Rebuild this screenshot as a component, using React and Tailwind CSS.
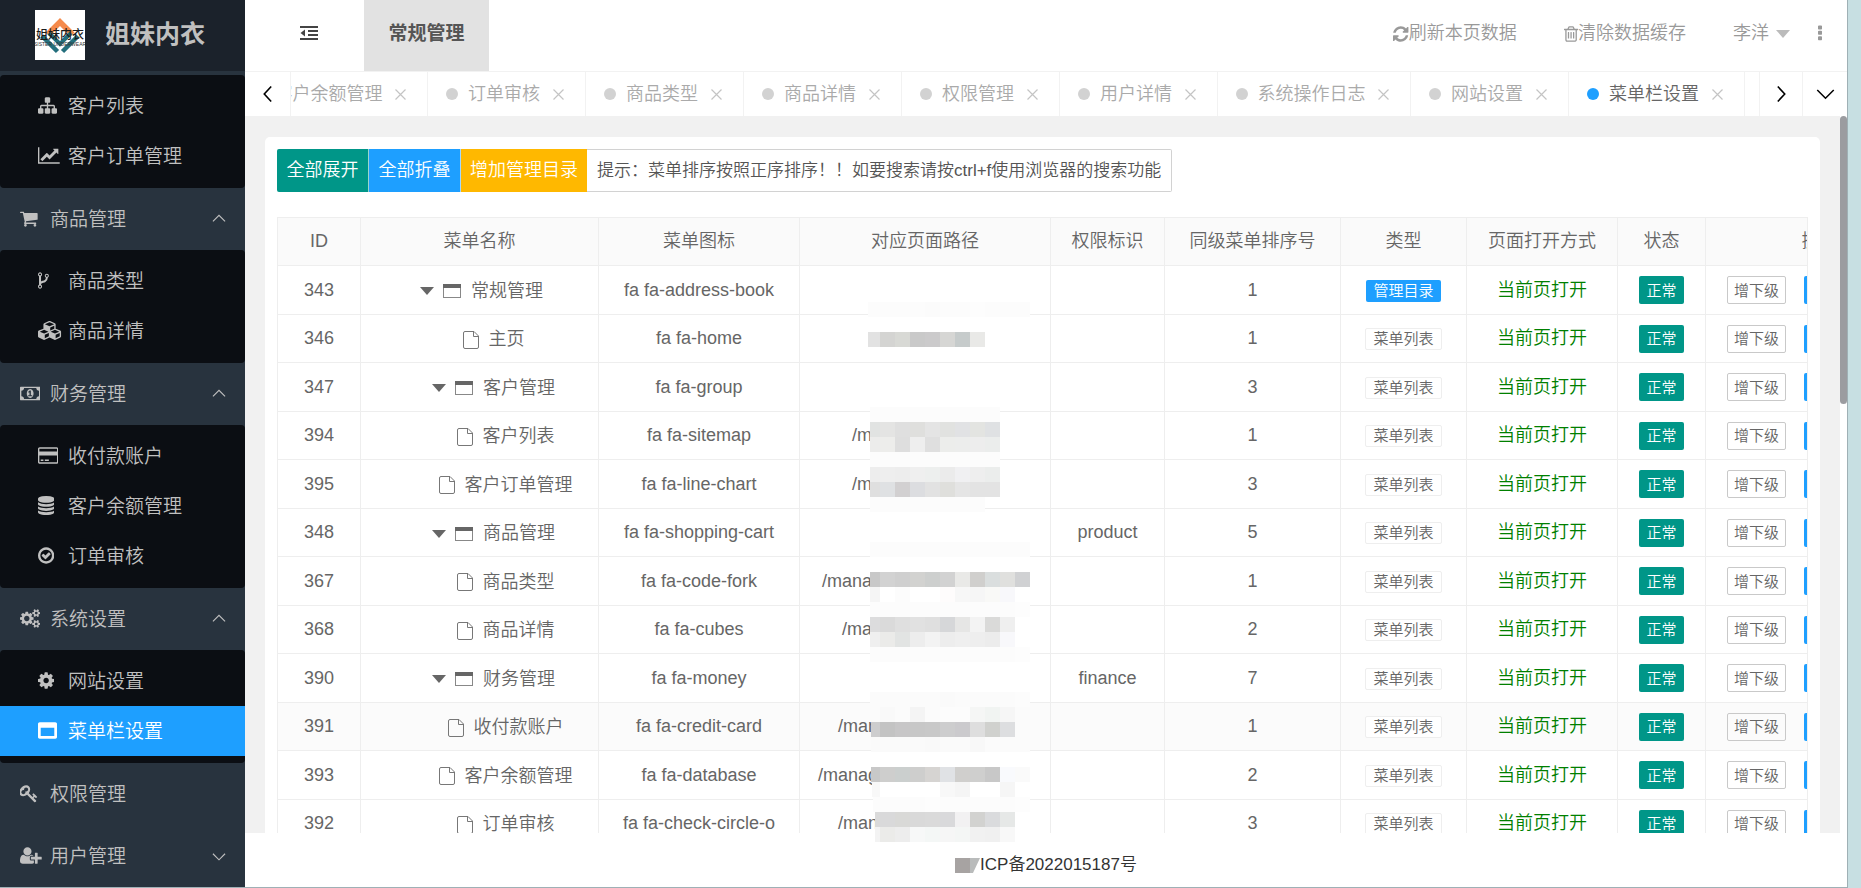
import React from "react";

const GLYPHS = {
  sitemap: ["0 0 1792 1792", "M1792 1248v320q0 40-28 68t-68 28h-320q-40 0-68-28t-28-68v-320q0-40 28-68t68-28h96v-192h-512v192h96q40 0 68 28t28 68v320q0 40-28 68t-68 28h-320q-40 0-68-28t-28-68v-320q0-40 28-68t68-28h96v-192h-512v192h96q40 0 68 28t28 68v320q0 40-28 68t-68 28h-320q-40 0-68-28t-28-68v-320q0-40 28-68t68-28h96v-192q0-52 38-90t90-38h512v-192h-96q-40 0-68-28t-28-68v-320q0-40 28-68t68-28h320q40 0 68 28t28 68v320q0 40-28 68t-68 28h-96v192h512q52 0 90 38t38 90v192h96q40 0 68 28t28 68z"],
  lineChart: ["0 0 2048 1792", "M2048 1536v128h-2048v-1536h128v1408h1920zm-128-1248v435q0 21-19.5 29.5t-35.5-7.5l-121-121-633 633q-10 10-23 10t-23-10l-233-233-416 416-192-192 585-585q10-10 23-10t23 10l233 233 464-464-121-121q-16-16-7.5-35.5t29.5-19.5h435q14 0 23 9t9 23z"],
  cart: ["64 0 1664 1792", "M704 1536q0 52-38 90t-90 38-90-38-38-90 38-90 90-38 90 38 38 90zm896 0q0 52-38 90t-90 38-90-38-38-90 38-90 90-38 90 38 38 90zm128-1088v512q0 24-16.5 42.5t-40.5 21.5l-1044 122q13 60 13 70 0 16-24 64h920q26 0 45 19t19 45-19 45-45 19h-1024q-26 0-45-19t-19-45q0-11 8-31.5t16-36 21.5-40 15.5-29.5l-177-823h-204q-26 0-45-19t-19-45 19-45 45-19h256q16 0 28.5 6.5t19.5 15.5 13 24.5 8 26 5.5 29.5 4.5 26h1201q26 0 45 19t19 45z"],
  fork: ["384 0 1024 1792", "M672 1472q0-40-28-68t-68-28-68 28-28 68 28 68 68 28 68-28 28-68zm0-1152q0-40-28-68t-68-28-68 28-28 68 28 68 68 28 68-28 28-68zm640 128q0-40-28-68t-68-28-68 28-28 68 28 68 68 28 68-28 28-68zm96 0q0 52-26 96.5t-70 69.5q-2 287-226 414-67 38-203 81-128 40-169.5 71t-41.5 100v26q44 25 70 69.5t26 96.5q0 80-56 136t-136 56-136-56-56-136q0-52 26-96.5t70-69.5v-820q-44-25-70-69.5t-26-96.5q0-80 56-136t136-56 136 56 56 136q0 52-26 96.5t-70 69.5v497q54-26 154-57 55-17 87.5-29.5t70.5-31 59-39.5 40.5-51 28-69.5 8.5-91.5q-44-25-70-69.5t-26-96.5q0-80 56-136t136-56 136 56 56 136z"],
  check: ["128 0 1536 1792", "M1299 813l-422 422q-19 19-45 19t-45-19l-294-294q-19-19-19-45t19-45l102-102q19-19 45-19t45 19l147 147 275-275q19-19 45-19t45 19l102 102q19 19 19 45t-19 45zm141 83q0-148-73-273t-198-198-273-73-273 73-198 198-73 273 73 273 198 198 273 73 273-73 198-198 73-273zm224 0q0 209-103 385.5t-279.5 279.5-385.5 103-385.5-103-279.5-279.5-103-385.5 103-385.5 279.5-279.5 385.5-103 385.5 103 279.5 279.5 103 385.5z"],
  cog: ["128 0 1536 1792", "M1152 896q0-106-75-181t-181-75-181 75-75 181 75 181 181 75 181-75 75-181zm512-109v222q0 12-8 23t-20 13l-185 28q-19 54-39 91 35 50 107 138 10 12 10 25t-9 23q-27 37-99 108t-94 71q-12 0-26-9l-138-108q-44 23-91 38-16 136-29 186-7 28-36 28h-222q-14 0-24.5-8.5t-11.5-21.5l-28-184q-49-16-90-37l-141 107q-10 9-25 9-14 0-25-11-126-114-165-168-7-10-7-23 0-12 8-23 15-21 51-66.5t54-70.5q-27-50-41-99l-183-27q-13-2-21-12.5t-8-23.5v-222q0-12 8-23t19-13l186-28q14-46 39-92-40-57-107-138-10-12-10-24 0-10 9-23 26-36 98.5-107.5t94.5-71.5q13 0 26 10l138 107q44-23 91-38 16-136 29-186 7-28 36-28h222q14 0 24.5 8.5t11.5 21.5l28 184q49 16 90 37l142-107q9-9 24-9 13 0 25 10 129 119 165 170 7 8 7 22 0 12-8 23-15 21-51 66.5t-54 70.5q26 50 41 98l183 28q13 2 21 12.5t8 23.5z"],
  key: ["64 0 1664 1792", "M832 512q0-80-56-136t-136-56-136 56-56 136q0 42 19 83-41-19-83-19-80 0-136 56t-56 136 56 136 136 56 136-56 56-136q0-42-19-83 41 19 83 19 80 0 136-56t56-136zm851 704q0 17-49 66t-66 49q-9 0-28.5-16t-36.5-33-38.5-40-24.5-26l-96 96 220 220q28 28 28 68 0 42-39 81t-81 39q-40 0-68-28l-671-671q-176 131-365 131-163 0-265.5-102.5t-102.5-265.5q0-160 95-313t248-248 313-95q163 0 265.5 102.5t102.5 265.5q0 189-131 365l355 355 96-96q-3-3-26-24.5t-40-38.5-33-36.5-16-28.5q0-17 49-66t66-49q13 0 23 10 6 6 46 44.5t82 79.5 86.5 86 73 78 28.5 41z"],
  userPlus: ["0 0 2048 1792", "M704 896q-159 0-271.5-112.5t-112.5-271.5 112.5-271.5 271.5-112.5 271.5 112.5 112.5 271.5-112.5 271.5-271.5 112.5zm960 128h352q13 0 22.5 9.5t9.5 22.5v192q0 13-9.5 22.5t-22.5 9.5h-352v352q0 13-9.5 22.5t-22.5 9.5h-192q-13 0-22.5-9.5t-9.5-22.5v-352h-352q-13 0-22.5-9.5t-9.5-22.5v-192q0-13 9.5-22.5t22.5-9.5h352v-352q0-13 9.5-22.5t22.5-9.5h192q13 0 22.5 9.5t9.5 22.5v352zm-736 224q0 52 38 90t90 38h256v238q-68 50-171 50h-874q-121 0-194-69t-73-190q0-53 3.5-103.5t14-109 26.5-108.5 43-97.5 62-81 85.5-53.5 111.5-20q19 0 39 17 79 61 154.5 91.5t164.5 30.5 164.5-30.5 154.5-91.5q20-17 39-17 132 0 217 96h-223q-52 0-90 38t-38 90v192z"],
  refresh: ["128 0 1536 1792", "M1639 1056q0 5-1 7-64 268-268 434.5t-478 166.5q-146 0-282.5-55t-243.5-157l-129 129q-19 19-45 19t-45-19-19-45v-448q0-26 19-45t45-19h448q26 0 45 19t19 45-19 45l-137 137q71 66 161 102t187 36q134 0 250-65t186-179q11-17 53-117 8-23 30-23h192q13 0 22.5 9.5t9.5 22.5zm25-800v448q0 26-19 45t-45 19h-448q-26 0-45-19t-19-45 19-45l138-138q-148-137-349-137-134 0-250 65t-186 179q-11 17-53 117-8 23-30 23h-199q-13 0-22.5-9.5t-9.5-22.5v-7q65-268 270-434.5t480-166.5q146 0 284 55.5t245 156.5l130-129q19-19 45-19t45 19 19 45z"],
  trash: ["192 0 1408 1792", "M704 736v576q0 14-9 23t-23 9h-64q-14 0-23-9t-9-23v-576q0-14 9-23t23-9h64q14 0 23 9t9 23zm256 0v576q0 14-9 23t-23 9h-64q-14 0-23-9t-9-23v-576q0-14 9-23t23-9h64q14 0 23 9t9 23zm256 0v576q0 14-9 23t-23 9h-64q-14 0-23-9t-9-23v-576q0-14 9-23t23-9h64q14 0 23 9t9 23zm128 724v-948h-896v948q0 22 7 40.5t14.5 27 10.5 8.5h832q3 0 10.5-8.5t14.5-27 7-40.5zm-672-1076h448l-48-117q-7-9-17-11h-317q-10 2-17 11zm928 32v64q0 14-9 23t-23 9h-96v948q0 83-47 143.5t-113 60.5h-832q-66 0-113-58.5t-47-141.5v-952h-96q-14 0-23-9t-9-23v-64q0-14 9-23t23-9h309l70-167q15-37 54-63t79-26h320q40 0 79 26t54 63l70 167h309q14 0 23 9t9 23z"],
  database: ["128 0 1536 1792", "M896 768q237 0 443-43t325-127v170q0 69-103 128t-280 93.5-385 34.5-385-34.5-280-93.5-103-128v-170q119 84 325 127t443 43zm0 768q237 0 443-43t325-127v170q0 69-103 128t-280 93.5-385 34.5-385-34.5-280-93.5-103-128v-170q119 84 325 127t443 43zm0-384q237 0 443-43t325-127v170q0 69-103 128t-280 93.5-385 34.5-385-34.5-280-93.5-103-128v-170q119 84 325 127t443 43zm0-1152q208 0 385 34.5t280 93.5 103 128v128q0 69-103 128t-280 93.5-385 34.5-385-34.5-280-93.5-103-128v-128q0-69 103-128t280-93.5 385-34.5z"],
  window: ["0 0 1792 1792", "M256 1408h1280v-768h-1280v768zm1536-1120v1216q0 66-47 113t-113 47h-1472q-66 0-113-47t-47-113v-1216q0-66 47-113t113-47h1472q66 0 113 47t47 113z"],
  card: ["0 0 1920 1792", "M1760 128q66 0 113 47t47 113v1216q0 66-47 113t-113 47h-1600q-66 0-113-47t-47-113v-1216q0-66 47-113t113-47h1600zm-1600 128q-13 0-22.5 9.5t-9.5 22.5v224h1664v-224q0-13-9.5-22.5t-22.5-9.5h-1600zm1600 1280q13 0 22.5-9.5t9.5-22.5v-608h-1664v608q0 13 9.5 22.5t22.5 9.5h1600zm-1504-128v-128h256v128h-256zm384 0v-128h384v128h-384z"],
  money: ["0 0 1920 1792", "M768 1152h384v-96h-128v-448h-114l-148 137 77 80q42-37 55-57h2v288h-128v96zm512-256q0 70-21 142t-59.5 134-101.5 101-138 39-138-39-101.5-101-59.5-134-21-142 21-142 59.5-134 101.5-101 138-39 138 39 101.5 101 59.5 134 21 142zm512 256v-512q-106 0-181-75t-75-181h-1152q0 106-75 181t-181 75v512q106 0 181 75t75 181h1152q0-106 75-181t181-75zm128-832v1152q0 26-19 45t-45 19h-1792q-26 0-45-19t-19-45v-1152q0-26 19-45t45-19h1792q26 0 45 19t19 45z"],
  ellipsis: ["704 0 384 1792", "M1088 1248v192q0 40-28 68t-68 28h-192q-40 0-68-28t-28-68v-192q0-40 28-68t68-28h192q40 0 68 28t28 68zm0-512v192q0 40-28 68t-68 28h-192q-40 0-68-28t-28-68v-192q0-40 28-68t68-28h192q40 0 68 28t28 68zm0-512v192q0 40-28 68t-68 28h-192q-40 0-68-28t-28-68v-192q0-40 28-68t68-28h192q40 0 68 28t28 68z"],
  cubes: ["0 0 2304 1792", "M640 1632l384-192v-314l-384 164v342zm-64-454l404-173-404-173-404 173zm1088 454l384-192v-314l-384 164v342zm-64-454l404-173-404-173-404 173zm-448-293l384-165v-266l-384 164v267zm-64-379l441-189-441-189-441 189zm1088 518v416q0 36-19 67t-52 47l-448 224q-25 14-57 14t-57-14l-448-224q-4-2-7-4-2 2-7 4l-448 224q-25 14-57 14t-57-14l-448-224q-33-16-52-47t-19-67v-416q0-38 21.500-70t56.500-48l434-186v-400q0-38 21.500-70t56.500-48l448-192q23-10 50-10t50 10l448 192q35 16 56.500 48t21.500 70v400l434 186q36 16 57 48t21 70z"],
  cogs: ["0 0 1920 1792", "M896 896q0-106-75-181t-181-75-181 75-75 181 75 181 181 75 181-75 75-181zm768 512q0-52-38-90t-90-38-90 38-38 90q0 53 37.500 90.500t90.500 37.500 90.500-37.500 37.500-90.500zm0-1024q0-52-38-90t-90-38-90 38-38 90q0 53 37.500 90.500t90.500 37.500 90.500-37.500 37.500-90.500zm-384 421v185q0 10-7 19.500t-16 10.500l-155 24q-11 35-32 76 34 48 90 115 7 11 7 20 0 12-7 19-23 30-82.500 89.500t-78.500 59.500q-11 0-21-7l-115-90q-37 19-77 31-11 108-23 155-7 24-30 24h-186q-11 0-20-7.500t-10-17.500l-23-153q-34-10-75-31l-118 89q-7 7-20 7-11 0-21-8-144-133-144-160 0-9 7-19 10-14 41-53t47-61q-23-44-35-82l-152-24q-10-1-17-9.500t-7-19.500v-185q0-10 7-19.500t16-10.500l155-24q11-35 32-76-34-48-90-115-7-11-7-20 0-12 7-20 22-30 82-89t79-59q11 0 21 7l115 90q34-18 77-32 11-108 23-154 7-24 30-24h186q11 0 20 7.500t10 17.500l23 153q34 10 75 31l118-89q8-7 20-7 11 0 21 8 144 133 144 160 0 8-7 19-12 16-42 54t-45 60q23 48 34 82l152 23q10 2 17 10.500t7 19.500zm640 533v140q0 16-149 31-12 27-30 52 51 113 51 138 0 4-4 7-122 71-124 71-8 0-46-47t-52-68q-20 2-30 2t-30-2q-14 21-52 68t-46 47q-2 0-124-71-4-3-4-7 0-25 51-138-18-25-30-52-149-15-149-31v-140q0-16 149-31 13-29 30-52-51-113-51-138 0-4 4-7 4-2 35-20t59-34 30-16q8 0 46 46.500t52 67.500q20-2 30-2t30 2q51-71 92-112l6-2q4 0 124 70 4 3 4 7 0 25-51 138 17 23 30 52 149 15 149 31zm0-1024v140q0 16-149 31-12 27-30 52 51 113 51 138 0 4-4 7-122 71-124 71-8 0-46-47t-52-68q-20 2-30 2t-30-2q-14 21-52 68t-46 47q-2 0-124-71-4-3-4-7 0-25 51-138-18-25-30-52-149-15-149-31v-140q0-16 149-31 13-29 30-52-51-113-51-138 0-4 4-7 4-2 35-20t59-34 30-16q8 0 46 46.500t52 67.500q20-2 30-2t30 2q51-71 92-112l6-2q4 0 124 70 4 3 4 7 0 25-51 138 17 23 30 52 149 15 149 31z"],
};

function Glyph({ name, className = "h-[19px]" }) {
  const [viewBox, d] = GLYPHS[name];
  return (
    <svg viewBox={viewBox} className={`${className} w-auto shrink-0`} fill="currentColor" aria-hidden="true">
      <path d={d} />
    </svg>
  );
}

function Chevron({ dir, className = "h-[14px] w-[14px]", width = 1.2 }) {
  const d = { up: "M1 9L7.500 2.500L14 9", down: "M1 4L7.500 10.500L14 4", left: "M10.500 0.500L4 7.500L10.500 14.500", right: "M4.500 0.500L11 7.500L4.500 14.500" }[dir];
  return (
    <svg viewBox="0 0 15 15" className={`${className} shrink-0`} fill="none" stroke="currentColor" strokeWidth={width} aria-hidden="true">
      <path d={d} />
    </svg>
  );
}

function FoldIcon() {
  return (
    <svg viewBox="0 0 19 15" className="h-[15px] w-[19px]" fill="#444" aria-hidden="true">
      <rect x="0" y="0" width="18" height="2" />
      <rect x="8" y="4" width="10" height="2" />
      <rect x="8" y="8" width="10" height="2" />
      <rect x="0" y="12" width="18" height="2" />
      <path d="M5 3.500V10.500L0.500 7Z" />
    </svg>
  );
}

function Logo() {
  return (
    <svg viewBox="0 0 50 50" className="h-[50px] w-[50px] bg-white" role="img" aria-label="logo">
      <path d="M10.500 22.500L25 8L39.500 22.500L35.500 26.500L25 16L14.500 26.500Z" fill="#f58a4b" />
      <path d="M7 26L22.500 41.500M43 26L27.500 41.500" stroke="#246f7d" strokeWidth="4.500" />
      <path d="M14 23L25 34L36 23" fill="none" stroke="#246f7d" strokeWidth="4" />
      <text x="25" y="29" fontSize="12" fontWeight="500" textAnchor="middle" fill="#1c1c1c">姐妹内衣</text>
      <text x="25" y="36" fontSize="5" textAnchor="middle" fill="#333">SISTER UNDERWEAR</text>
    </svg>
  );
}

const MENU = [
  { items: [["客户列表", "sitemap"], ["客户订单管理", "lineChart"]] },
  { label: "商品管理", icon: "cart", open: true, items: [["商品类型", "fork"], ["商品详情", "cubes"]] },
  { label: "财务管理", icon: "money", open: true, items: [["收付款账户", "card"], ["客户余额管理", "database"], ["订单审核", "check"]] },
  { label: "系统设置", icon: "cogs", open: true, items: [["网站设置", "cog"], ["菜单栏设置", "window", true]] },
  { label: "权限管理", icon: "key" },
  { label: "用户管理", icon: "userPlus", open: false, items: [] },
];

function Sidebar() {
  return (
    <aside className="flex w-[245px] shrink-0 flex-col overflow-hidden bg-[#28333e] text-[19px] text-[#c0c0c0]">
      <div className="mb-1 flex h-[71px] shrink-0 items-center gap-[20px] bg-[#1b222b] pb-px pl-[35px]">
        <Logo />
        <span className="text-[25px] font-bold">姐妹内衣</span>
      </div>
      <nav>
        {MENU.map((group, i) => (
          <div key={i}>
            {group.label && (
              <button type="button" className="flex h-[62px] w-full items-center pt-[2px] pr-[19px] pl-5 text-left">
                <span className="flex w-[30px] pb-[3px]"><Glyph name={group.icon} /></span>
                <span className="flex-1">{group.label}</span>
                {group.items && <Chevron dir={group.open ? "up" : "down"} />}
              </button>
            )}
            {group.items && group.items.length > 0 && (
              <ul className="rounded-sm bg-[#0b0e13] pt-[6px] pb-[7px]">
                {group.items.map(([text, icon, active]) => (
                  <li key={text}>
                    <a href="#" className={`flex h-[50px] items-center pt-[2px] pl-[38px] ${active ? "bg-[#1e9fff] text-white" : ""}`}>
                      <span className="flex w-[30px] pb-[3px]"><Glyph name={icon} /></span>
                      {text}
                    </a>
                  </li>
                ))}
              </ul>
            )}
          </div>
        ))}
      </nav>
    </aside>
  );
}

function TopBar() {
  return (
    <header className="flex h-[72px] shrink-0 items-center border-b border-[#f2f2f2] text-[#999]">
      <button type="button" aria-label="收起菜单" className="flex w-[119px] justify-center pb-1 pl-[10px]"><FoldIcon /></button>
      <a href="#" className="flex h-full w-[125px] items-center justify-center bg-[#e2e2e2] pb-[3px] text-[19px] font-bold text-[#555]">常规管理</a>
      <div className="ml-auto flex items-center pr-[25px] pb-[4px]">
        <button type="button" className="mr-[47px] flex items-center"><Glyph name="refresh" className="h-[18px]" />刷新本页数据</button>
        <button type="button" className="mr-[47px] flex items-center"><Glyph name="trash" className="h-[18px]" />清除数据缓存</button>
        <button type="button" className="mr-[28px] flex items-center gap-[7px]">
          李洋
          <svg viewBox="0 0 14 8" className="h-[8px] w-[14px]" fill="#bbb" aria-hidden="true"><path d="M0 0H14L7 8Z" /></svg>
        </button>
        <button type="button" aria-label="更多"><Glyph name="ellipsis" className="h-[19px]" /></button>
      </div>
    </header>
  );
}

const TABS = [
  ["客户余额管理", "w-[193px]"], ["订单审核", "w-[158px]"], ["商品类型", "w-[158px]"], ["商品详情", "w-[158px]"], ["权限管理", "w-[158px]"],
  ["用户详情", "w-[158px]"], ["系统操作日志", "w-[193px]"], ["网站设置", "w-[158px]"], ["菜单栏设置", "w-[176px]", true],
];

function TabStrip() {
  return (
    <div className="flex h-[44px] shrink-0 text-black">
      <button type="button" aria-label="向左" className="flex w-[46px] shrink-0 items-center justify-center border-r border-[#f2f2f2]"><Chevron dir="left" className="h-[16px] w-[16px]" width={1.500} /></button>
      <div className="flex min-w-0 flex-1 justify-end overflow-hidden pr-[14px]">
        {TABS.map(([text, width, active]) => (
          <div key={text} className={`${width} flex shrink-0 items-center border-r border-[#f2f2f2] pr-[21px] pl-[18px]`}>
            <span className={`h-[12px] w-[12px] rounded-full ${active ? "bg-[#1e9fff]" : "bg-[#d2d2d2]"}`} />
            <a href="#" className={`flex-1 pr-[3px] text-center whitespace-nowrap ${active ? "text-[#666]" : "text-[#aaa]"}`}>{text}</a>
            <button type="button" aria-label={`关闭${text}`} className="pt-px text-[#c4c4c4]">
              <svg viewBox="0 0 11 11" className="h-[11px] w-[11px]" stroke="currentColor" strokeWidth="1.200" aria-hidden="true"><path d="M0.500 0.500L10.500 10.500M10.500 0.500L0.500 10.500" /></svg>
            </button>
          </div>
        ))}
      </div>
      <button type="button" aria-label="向右" className="flex w-[44px] shrink-0 items-center justify-center border-x border-[#f2f2f2]"><Chevron dir="right" className="h-[16px] w-[16px]" width={1.500} /></button>
      <button type="button" aria-label="标签操作" className="flex w-[44px] shrink-0 items-center justify-center"><Chevron dir="down" className="h-[19px] w-[19px]" width={1.200} /></button>
    </div>
  );
}

// [id, level, folder?, name, icon class, visible path, permission, order]
const ROWS = [
  [343, 1, true, "常规管理", "fa fa-address-book", "", "", 1],
  [346, 2, false, "主页", "fa fa-home", "", "", 1],
  [347, 2, true, "客户管理", "fa fa-group", "", "", 3],
  [394, 3, false, "客户列表", "fa fa-sitemap", "/m", "", 1],
  [395, 3, false, "客户订单管理", "fa fa-line-chart", "/m", "", 3],
  [348, 2, true, "商品管理", "fa fa-shopping-cart", "", "product", 5],
  [367, 3, false, "商品类型", "fa fa-code-fork", "/mana", "", 1],
  [368, 3, false, "商品详情", "fa fa-cubes", "/ma", "", 2],
  [390, 2, true, "财务管理", "fa fa-money", "", "finance", 7],
  [391, 3, false, "收付款账户", "fa fa-credit-card", "/man", "", 1],
  [393, 3, false, "客户余额管理", "fa fa-database", "/manag", "", 2],
  [392, 3, false, "订单审核", "fa fa-check-circle-o", "/man", "", 3],
];

const COLUMNS = [
  ["ID", "w-[83px]"], ["菜单名称", "w-[238px]"], ["菜单图标", "w-[201px]"], ["对应页面路径", "w-[251px]"], ["权限标识", "w-[114px]"],
  ["同级菜单排序号", "w-[176px]"], ["类型", "w-[126px]"], ["页面打开方式", "w-[151px]"], ["状态", "w-[88px]"], ["操作", "w-[228px]"],
];

const INDENT = { 1: "pl-1", 2: "pl-7", 3: "pl-13" };

function NodeName({ level, folder, name }) {
  return (
    <div className={`flex items-center justify-center pt-[2px] ${INDENT[level]}`}>
      {folder && (
        <svg viewBox="0 0 14 8" className="mr-[9px] h-[8px] w-[14px]" fill="#666" aria-hidden="true"><path d="M0 0H14L7 8Z" /></svg>
      )}
      {folder ? (
        <svg viewBox="0 0 18 14" className="h-[14px] w-[18px]" aria-hidden="true">
          <rect x="0.500" y="0.500" width="17" height="13" fill="#fff" stroke="#888" />
          <rect width="18" height="4" fill="#666" />
        </svg>
      ) : (
        <svg viewBox="0 0 16 18" className="h-[18px] w-[16px]" fill="none" stroke="#777" aria-hidden="true">
          <path d="M2 0.500H11L15.500 5V16Q15.500 17.500 14 17.500H2Q0.500 17.500 0.500 16V2Q0.500 0.500 2 0.500ZM10.500 0.500V5.500H15.500" />
        </svg>
      )}
      <span className="ml-[10px]">{name}</span>
    </div>
  );
}

function MenuTable() {
  return (
    <div className="overflow-hidden border-r border-[#eee]">
      <table className="w-[1656px] table-fixed border-collapse text-center">
        <thead>
          <tr className="h-[48px] bg-[#fafafa]">
            {COLUMNS.map(([title, width]) => (
              <th key={title} scope="col" className={`${width} border border-[#eee] font-[350]`}>{title}</th>
            ))}
          </tr>
        </thead>
        <tbody>
          {ROWS.map(([id, level, folder, name, icon, path, perm, order]) => (
            <tr key={id} className={`odd:h-[49px] even:h-[48px] ${id === 391 ? "bg-[#fbfbfb]" : ""}`}>
              <td className="border border-[#eee]">{id}</td>
              <td className="border border-[#eee]"><NodeName level={level} folder={folder} name={name} /></td>
              <td className="border border-[#eee]">{icon}</td>
              <td className="border border-[#eee] text-left">
                <span className={`block text-right ${path.length > 3 && path !== "/mana" ? "w-[78px]" : "w-[72px]"}`}>{path}</span>
              </td>
              <td className="border border-[#eee]">{perm}</td>
              <td className="border border-[#eee]">{order}</td>
              <td className="border border-[#eee]">
                {level === 1 ? (
                  <span className="inline-flex h-[22px] items-center rounded-xs bg-[#1e9fff] px-[7px] align-middle text-[15px] text-white">管理目录</span>
                ) : (
                  <span className="inline-flex h-[22px] items-center rounded-xs border border-[#eee] bg-white px-[7px] align-middle text-[15px]">菜单列表</span>
                )}
              </td>
              <td className="border border-[#eee] text-[#008000]">当前页打开</td>
              <td className="border border-[#eee]">
                <button type="button" className="h-[28px] rounded-xs bg-[#009688] px-[7px] pt-[2px] align-middle text-[15px] text-white">正常</button>
              </td>
              <td className="border border-[#eee]">
                <div className="flex justify-center gap-[18px] text-[15px]">
                  <button type="button" className="h-[28px] rounded-xs border border-[#c9c9c9] px-[6px] pt-[2px]">增下级</button>
                  <button type="button" className="h-[28px] rounded-xs bg-[#1e9fff] px-[8px] pt-[2px] text-white">编辑</button>
                  <button type="button" className="h-[28px] rounded-xs bg-[#ff5722] px-[7px] pt-[2px] text-white">删除</button>
                </div>
              </td>
            </tr>
          ))}
        </tbody>
      </table>
    </div>
  );
}

// Pixelated cover over private paths: [x, y, cell colours]; first cell ends on the 15px grid.
const MOSAIC = [
  [3, 2, "fcfcfc fcfcfc fcfcfc fcfcfc fbfbfb fcfcfc fcfcfc fdfdfd fcfcfc fcfcfc fcfcfc"],
  [3, 32, "e2e2e2 d4d4d2 d8d9d5 c9c9c9 cbcacb d6d6d4 c6cbcb e9e9e7"],
  [5, 107, "fcfcfc fcfcfc fcfcfc fcfcfc fcfcfc fcfcfc fcfcfc fcfcfc fcfcfc"],
  [5, 122, "e1e3e2 e4e4e3 dfdfdf dfdfdd e4e4e4 e1e2e0 e1e2e4 e3e4e1 dfe1e3"],
  [5, 137, "ececeb ededeb dedede eeeeee dfdfdf ecedeb ecedec ededed ebedec"],
  [5, 152, "fcfcfc fcfcfc fcfcfc fcfcfc fcfcfc fcfcfc fcfcfc fcfcfc fcfcfc"],
  [5, 167, "ededed eeeeee ededed efefef edefee ebebeb f0f0f2 eeeeee ebedec"],
  [5, 182, "dfdfdf dfe1e3 d2d0d1 dcdde0 e2e2e2 dfdfdc e5e5e5 e3e3e3 e3e3e3"],
  [5, 197, "fcfcfc fcfcfc fcfcfc fcfcfc fcfcfc fcfcfc fcfcfc fcfcfc"],
  [5, 242, "fcfcfc fcfcfc fcfcfc fcfcfc fcfcfc fcfcfc fcfcfc fcfcfc fcfcfc fcfcfc fcfcfc"],
  [5, 272, "c8c8c8 d2d2d2 cfcfcf d2d2d0 cdcfce d2d2d2 e9e9e7 d0cfcd dadede e0e0de d0d1d3"],
  [5, 287, "f5f5f5 ffffff fcfcfc ffffff ffffff fefcfc f7f7f7 f6f6f6 f9f9f7 f8f8fb"],
  [5, 302, "fcfcfc fcfcfc fcfcfc fcfcfc fcfcfc fcfcfc fcfcfc fcfcfc fcfcfc fcfcfc fdfdfd"],
  [5, 317, "dcdcdd dadada dfdfdf e1e1e1 dfdfdf d6d7d9 e6e6e5 f3f3f3 dadad9 efefef"],
  [5, 332, "efefef ebebe9 e2e4e3 ededed f3f3f3 ededed efefef eeeeee ececec f8f8fb"],
  [5, 347, "fcfcfc fcfcfc fcfcfc fcfcfc fcfcfc fcfcfc fcfcfc fcfcfc fcfcfc fcfcfc fdfdfd"],
  [5, 392, "fbfbfb fbfbfb fbfbfb fbfbfb fbfbfb fafafa fbfbfb fbfbfb fbfbfb fbfbfb fcfcfc"],
  [5, 407, "fbfbfb f9f9f9 fbfbfb f4f4f4 fbfbfb fcfcfc fcfcfc f5f6f5 f1f4f2 f6f6f6"],
  [6, 422, "cdcdce c3c3c3 c7c6c7 c7c7c7 c8c8c8 cdcdce cbcacd dedede d0d1ce dddee0"],
  [6, 437, "fafafa fafafa fafafa fafafa f9f9f9 fafafa fafafa f8f8f8 fbfbfb fbfbfb fbfbfb"],
  [6, 467, "c8c8c8 cececd cbcfce cececd d6d4d2 e0e2e5 d0cfcd cfcfce c8c8c8 f9fafd fafafa"],
  [7, 482, "f8f8f8 ffffff ffffff ffffff ffffff f8f8f8 f5f5f5 ffffff ffffff f6f6f6"],
  [8, 497, "fcfcfc fcfcfc fcfcfc fcfcfc fdfdfd fcfcfc fcfcfc fcfcfc fcfcfc fcfcfc fdfdfd"],
  [10, 512, "dadada d9d9da d9d9d7 d9d9d9 dadada d9d9db f2f1f2 d2d2d0 dadbdd e6e8e7"],
  [10, 527, "f3f3f3 ebebe9 ededed f7f8f8 f4f7f6 f6f6f6 f4f6f5 f1f1f1 f0f0f0 f8f8f8"],
];

function Mosaic() {
  return (
    <svg viewBox="0 0 170 545" className="pointer-events-none absolute top-[300px] left-[620px] h-[545px] w-[170px]" shapeRendering="crispEdges" aria-hidden="true">
      {MOSAIC.map(([start, y, cells]) =>
        cells.split(" ").map((color, i) => {
          const x = i === 0 ? start : i * 15;
          return <rect key={`${y}-${i}`} x={x} y={y} width={i * 15 + 15 - x} height="15" fill={`#${color}`} />;
        })
      )}
    </svg>
  );
}

export default function App() {
  return (
    <div className="flex h-screen overflow-hidden bg-[#c7dfe2] pr-[13px] font-['Liberation_Sans','Noto_Sans_CJK_SC',sans-serif] text-[18px] font-[350] text-[#666]">
      <div className="flex min-w-0 flex-1 border-b border-[#9fb0b5]">
        <Sidebar />
        <main className="relative flex min-w-0 flex-1 flex-col border-r border-[#9fb0b5] bg-white">
          <TopBar />
          <TabStrip />
          <div className="flex min-h-0 flex-1">
            <div className="min-w-0 flex-1 overflow-hidden bg-[#f1f1f1] px-5 pt-[21px]">
              <section className="rounded-[5px] bg-white p-3">
                <div className="mb-[25px] flex h-[43px] text-white">
                  <button type="button" className="w-[92px] rounded-l-xs border-r border-white/60 bg-[#009688]">全部展开</button>
                  <button type="button" className="w-[92px] border-r border-white/60 bg-[#1e9fff]">全部折叠</button>
                  <button type="button" className="w-[126px] bg-[#ffb800]">增加管理目录</button>
                  <p className="flex items-center rounded-r-xs border border-l-0 border-[#d2d2d2] px-[10px] text-[17px] whitespace-nowrap text-[#555]">提示：菜单排序按照正序排序！！如要搜索请按ctrl+f使用浏览器的搜索功能</p>
                </div>
                <MenuTable />
              </section>
            </div>
            <div className="w-[7px] shrink-0">
              <div className="h-[288px] rounded-full bg-[#9b9ca0]" />
            </div>
          </div>
          <footer className="flex h-[54px] shrink-0 items-center justify-center pt-[10px] text-[17px] text-[#333]">
            <svg viewBox="0 0 25 15" className="h-[15px] w-[25px]" aria-hidden="true">
              <path d="M0 0H15V15H0Z" fill="#a7a3a2" />
              <path d="M15 0H25L18 15H15Z" fill="#b9bbbb" />
            </svg>
            ICP备2022015187号
          </footer>
          <Mosaic />
        </main>
      </div>
    </div>
  );
}
